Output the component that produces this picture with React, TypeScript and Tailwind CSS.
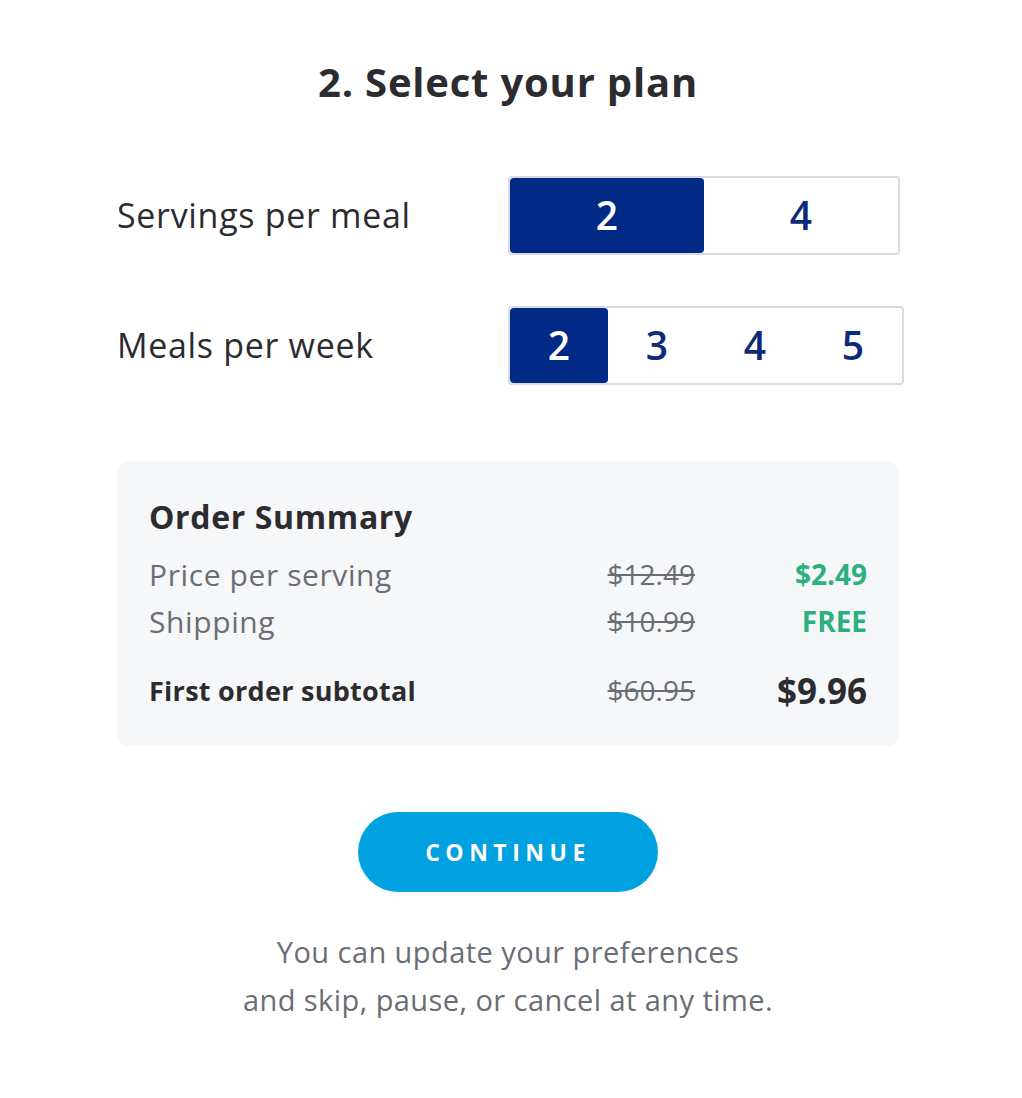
import { useState } from 'react'

const font = { fontFamily: '"Open Sans", Lato, sans-serif' }

function Segmented({
  options,
  value,
  onChange,
  width,
}: {
  options: number[]
  value: number
  onChange: (v: number) => void
  width: string
}) {
  return (
    <div className={`flex h-[79px] ${width} shrink-0 rounded-[4px] border-2 border-[#d9dbe0] bg-white`}>
      {options.map((opt) => (
        <button
          key={opt}
          type="button"
          onClick={() => onChange(opt)}
          className={`flex flex-1 items-center justify-center rounded-[4px] text-[39px] font-semibold ${
            opt === value ? 'bg-[#002a85] text-white' : 'text-[#0b2a78]'
          }`}
        >
          {opt}
        </button>
      ))}
    </div>
  )
}

export default function App() {
  const [servings, setServings] = useState(2)
  const [meals, setMeals] = useState(2)

  return (
    <div style={font} className="min-h-[1098px] w-full bg-white pt-[58px] text-[#2c2c30]">
      <div className="ml-[117px] w-[782px]">
        <h1 className="text-center text-[40px] font-bold leading-[48px] tracking-[0.02em]">2. Select your plan</h1>

        <div className="mt-[70px] flex flex-col gap-[51px]">
          <div className="flex items-center">
            <span className="w-[391px] shrink-0 text-[34px] font-medium tracking-[0.02em]">Servings per meal</span>
            <Segmented options={[2, 4]} value={servings} onChange={setServings} width="w-[392px]" />
          </div>
          <div className="flex items-center">
            <span className="w-[391px] shrink-0 text-[34px] font-medium tracking-[0.02em]">Meals per week</span>
            <Segmented options={[2, 3, 4, 5]} value={meals} onChange={setMeals} width="w-[396px]" />
          </div>
        </div>

        <div className="mt-[76px] w-full rounded-[12px] bg-[#f6f7f9] px-[32px] pt-[36px] pb-[32px]">
          <h2 className="text-[32px] font-bold leading-[40px] tracking-[0.02em]">Order Summary</h2>
          <div className="mt-[14px] grid grid-cols-[1fr_auto_172px] items-center text-[28px] leading-[47px]">
            <span className="text-[30px] tracking-[0.02em] text-[#6b6d74]">Price per serving</span>
            <span className="text-right text-[#6b6d74] line-through">$12.49</span>
            <span className="text-right font-bold text-[#2bb07f]">$2.49</span>

            <span className="text-[30px] tracking-[0.02em] text-[#6b6d74]">Shipping</span>
            <span className="text-right text-[#6b6d74] line-through">$10.99</span>
            <span className="text-right font-bold text-[#2bb07f]">FREE</span>

            <span className="mt-[22px] text-[27px] font-bold tracking-[0.01em]">First order subtotal</span>
            <span className="mt-[22px] text-right text-[#6b6d74] line-through">$60.95</span>
            <span className="mt-[22px] text-right text-[35px] font-bold">$9.96</span>
          </div>
        </div>

        <div className="mt-[66px] flex justify-center">
          <button
            type="button"
            className="h-[80px] w-[300px] rounded-full bg-[#00a1e0] text-[23px] font-bold tracking-[0.24em] text-white"
          >
            CONTINUE
          </button>
        </div>

        <p className="mt-[36px] text-center text-[29px] leading-[48px] tracking-[0.015em] text-[#6b6d74]">
          You can update your preferences
          <br />
          and skip, pause, or cancel at any time.
        </p>
      </div>
    </div>
  )
}
